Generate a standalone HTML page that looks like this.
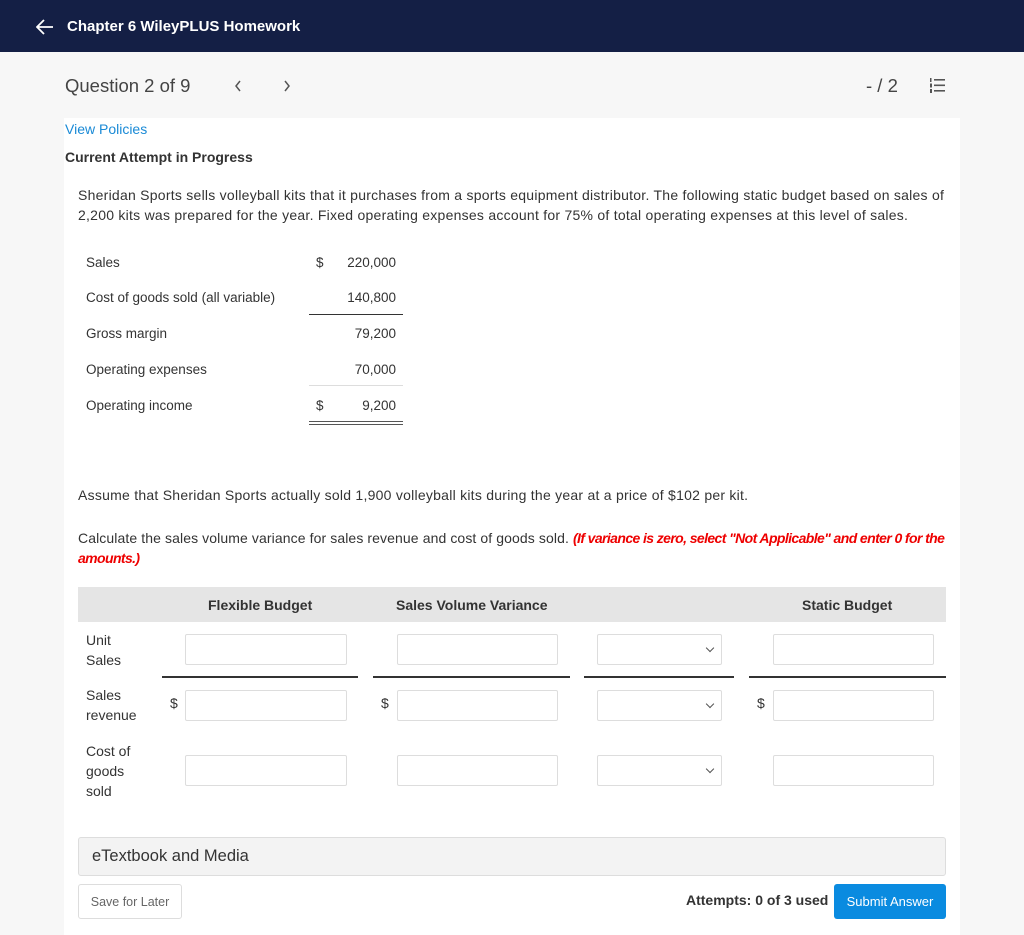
<!DOCTYPE html>
<html><head><meta charset="utf-8"><style>
*{margin:0;padding:0;box-sizing:border-box}
body{width:1024px;height:935px;background:#f7f7f7;font-family:"Liberation Sans",sans-serif;color:#333;position:relative;overflow:hidden;font-size:13.5px}
.a{position:absolute;white-space:nowrap}
.hdr{position:absolute;left:0;top:0;width:1024px;height:52px;background:#141f45}
.main{position:absolute;left:64px;top:118px;width:896px;height:817px;background:#fff}
.inp{position:absolute;height:31px;border:1px solid #ddd;border-radius:2px;background:#fff}
.sel{position:absolute;height:31px;border:1px solid #ddd;border-radius:2px;background:#fff}
.sel:after{content:"";position:absolute;right:8px;top:10px;width:5px;height:5px;border-right:1px solid #555;border-bottom:1px solid #555;transform:rotate(45deg)}
.ln{position:absolute;height:2px;background:#333}
.r{text-align:right}
.p{font-size:14px;letter-spacing:0.25px}
</style></head><body>
<div class="hdr"></div>
<svg class="a" style="left:36px;top:19px" width="18" height="16" viewBox="0 0 18 16"><path d="M8 1L1 8l7 7M1 8h16" stroke="#fff" stroke-width="1.8" fill="none"/></svg>
<div class="a" style="left:67px;top:18px;color:#fff;font-weight:bold;font-size:15px">Chapter 6 WileyPLUS Homework</div>
<div class="a" style="left:65px;top:75px;font-size:18.5px;color:#444">Question 2 of 9</div>
<svg class="a" style="left:234px;top:79px" width="8" height="14"><path d="M6 2L2 7l4 5" stroke="#555" stroke-width="1.5" fill="none"/></svg>
<svg class="a" style="left:283px;top:79px" width="8" height="14"><path d="M2 2l4 5-4 5" stroke="#555" stroke-width="1.5" fill="none"/></svg>
<div class="a" style="left:866px;top:75px;font-size:18.5px;color:#444">- / 2</div>
<svg class="a" style="left:929px;top:78px" width="16" height="15"><g fill="#555"><rect x="5" y="1" width="11" height="1.6"/><rect x="5" y="6.5" width="11" height="1.6"/><rect x="5" y="12" width="11" height="1.6"/><rect x="1" y="0" width="1.5" height="4"/><rect x="1" y="5.5" width="2" height="4"/><rect x="1" y="11" width="2" height="4"/></g></svg>
<div class="main"></div>
<div class="a" style="left:65px;top:121px;color:#1a8ad6;font-size:14px">View Policies</div>
<div class="a" style="left:65px;top:149px;font-weight:bold;font-size:14px">Current Attempt in Progress</div>
<div class="a p" style="left:78px;top:185px;line-height:20px">Sheridan Sports sells volleyball kits that it purchases from a sports equipment distributor. The following static budget based on sales of<br>2,200 kits was prepared for the year. Fixed operating expenses account for 75% of total operating expenses at this level of sales.</div>
<div class="a" style="left:86px;top:255px">Sales</div>
<div class="a" style="left:86px;top:290px">Cost of goods sold (all variable)</div>
<div class="a" style="left:86px;top:326px">Gross margin</div>
<div class="a" style="left:86px;top:362px">Operating expenses</div>
<div class="a" style="left:86px;top:398px">Operating income</div>
<div class="a" style="left:316px;top:255px">$</div>
<div class="a r" style="left:330px;top:255px;width:66px">220,000</div>
<div class="a r" style="left:330px;top:290px;width:66px">140,800</div>
<div class="a r" style="left:330px;top:326px;width:66px">79,200</div>
<div class="a r" style="left:330px;top:362px;width:66px">70,000</div>
<div class="a" style="left:316px;top:398px">$</div>
<div class="a r" style="left:330px;top:398px;width:66px">9,200</div>
<div class="ln" style="left:309px;top:314px;width:94px;height:1px"></div>
<div class="ln" style="left:309px;top:385px;width:94px;height:1px;background:#ddd"></div>
<div class="ln" style="left:309px;top:421px;width:94px;height:1px;background:#555"></div>
<div class="ln" style="left:309px;top:424px;width:94px;height:1px;background:#555"></div>
<div class="a p" style="left:78px;top:487px">Assume that Sheridan Sports actually sold 1,900 volleyball kits during the year at a price of $102 per kit.</div>
<div class="a" style="left:78px;top:528px;line-height:20px;font-size:14px;letter-spacing:0.1px">Calculate the sales volume variance for sales revenue and cost of goods sold. <b style="color:#e00;font-style:italic;letter-spacing:-0.6px">(If variance is zero, select "Not Applicable" and enter 0 for the<br>amounts.)</b></div>
<div class="a" style="left:78px;top:587px;width:868px;height:35px;background:#e5e5e5"></div>
<div class="a" style="left:208px;top:597px;font-weight:bold;font-size:14px">Flexible Budget</div>
<div class="a" style="left:396px;top:597px;font-weight:bold;font-size:14px">Sales Volume Variance</div>
<div class="a" style="left:802px;top:597px;font-weight:bold;font-size:14px">Static Budget</div>
<div class="a" style="left:86px;top:630px;line-height:20px;font-size:14px">Unit<br>Sales</div>
<div class="a" style="left:86px;top:685px;line-height:20px;font-size:14px">Sales<br>revenue</div>
<div class="a" style="left:86px;top:741px;line-height:20px;font-size:14px">Cost of<br>goods<br>sold</div>
<div class="inp" style="left:185px;top:634px;width:162px"></div>
<div class="inp" style="left:397px;top:634px;width:161px"></div>
<div class="sel" style="left:597px;top:634px;width:125px"></div>
<div class="inp" style="left:773px;top:634px;width:161px"></div>
<div class="ln" style="left:162px;top:676px;width:196px"></div>
<div class="ln" style="left:373px;top:676px;width:197px"></div>
<div class="ln" style="left:584px;top:676px;width:150px"></div>
<div class="ln" style="left:749px;top:676px;width:197px"></div>
<div class="a" style="left:170px;top:695px;font-size:14px">$</div>
<div class="a" style="left:381px;top:695px;font-size:14px">$</div>
<div class="a" style="left:757px;top:695px;font-size:14px">$</div>
<div class="inp" style="left:185px;top:690px;width:162px"></div>
<div class="inp" style="left:397px;top:690px;width:161px"></div>
<div class="sel" style="left:597px;top:690px;width:125px"></div>
<div class="inp" style="left:773px;top:690px;width:161px"></div>
<div class="inp" style="left:185px;top:755px;width:162px"></div>
<div class="inp" style="left:397px;top:755px;width:161px"></div>
<div class="sel" style="left:597px;top:755px;width:125px"></div>
<div class="inp" style="left:773px;top:755px;width:161px"></div>
<div class="a" style="left:78px;top:837px;width:868px;height:39px;background:#f3f3f3;border:1px solid #ddd;border-radius:3px"></div>
<div class="a" style="left:92px;top:847px;font-size:16.5px">eTextbook and Media</div>
<div class="a" style="left:78px;top:884px;width:104px;height:35px;border:1px solid #ddd;border-radius:3px;color:#666;font-size:12.5px;text-align:center;line-height:35px">Save for Later</div>
<div class="a" style="left:686px;top:892px;font-weight:bold;font-size:14px">Attempts: 0 of 3 used</div>
<div class="a" style="left:834px;top:884px;width:112px;height:35px;background:#0a8be0;border-radius:3px;color:#fff;font-size:13px;text-align:center;line-height:35px">Submit Answer</div>
</body></html>
